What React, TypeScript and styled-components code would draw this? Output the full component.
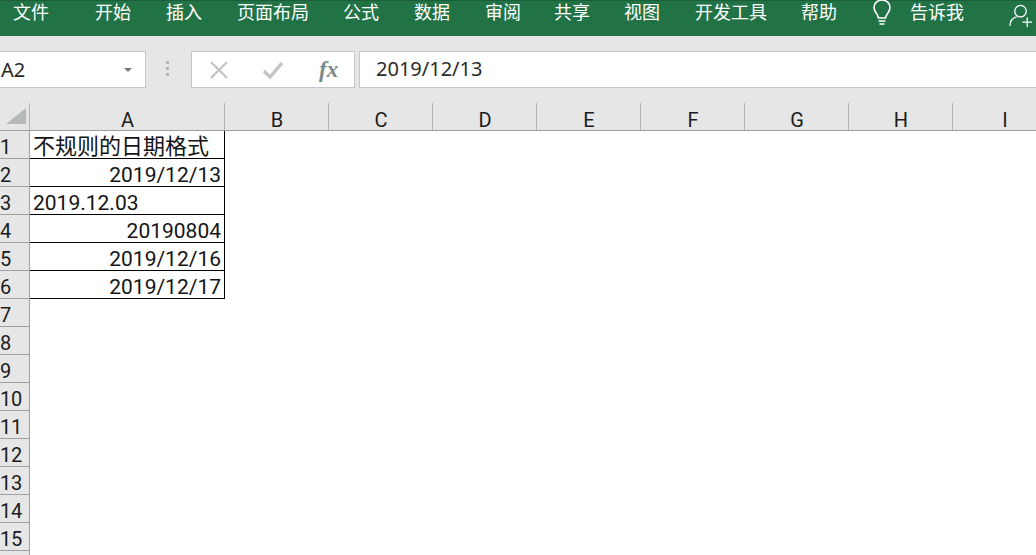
import React from "react";
import styled, { createGlobalStyle } from "styled-components";

const Global = createGlobalStyle`
  html, body { margin: 0; padding: 0; background: #fff; overflow: hidden; }
  #root { width: 1036px; height: 555px; overflow: hidden; }
`;

const Page = styled.div`
  width: 1036px;
  height: 555px;
  display: flex;
  flex-direction: column;
  overflow: hidden;
  font-family: Roboto, "Noto Sans CJK SC", sans-serif;
`;

const Ribbon = styled.div`
  flex: none;
  height: 36px;
  box-sizing: border-box;
  background: #217346;
  border-top: 1px solid #1b5e3a;
  display: flex;
  align-items: flex-start;
  padding-left: 13px;
  color: #fff;
  font-family: Roboto, "Noto Sans CJK SC", sans-serif;
  font-size: 18px;
  line-height: 23px;
`;

const Tab = styled.span<{ $gap: number }>`
  flex: none;
  margin-right: ${(p) => p.$gap}px;
`;

const BulbIcon = styled.svg`
  flex: none;
  width: 20px;
  height: 26px;
  margin: -1px 18px 0 0;
`;

const UserIcon = styled.svg`
  flex: none;
  width: 23px;
  height: 23px;
  margin: 3px 0 0 45px;
`;

const FormulaBar = styled.div`
  flex: none;
  height: 67px;
  box-sizing: border-box;
  background: #e6e6e6;
  padding-top: 15px;
  display: flex;
  align-items: flex-start;
`;

const Field = styled.div`
  box-sizing: border-box;
  height: 37px;
  background: #fff;
  border: 1px solid #c6c6c6;
  display: flex;
  align-items: center;
`;

const NameBox = styled(Field)`
  width: 146px;
  border-left: none;
  padding: 0 13px 0 1px;
  justify-content: space-between;
  font-family: "Noto Sans", sans-serif;
  font-size: 20px;
  line-height: 34px;
  color: #262626;
`;

const Caret = styled.span`
  width: 0;
  height: 0;
  border-left: 4px solid transparent;
  border-right: 4px solid transparent;
  border-top: 4px solid #777;
`;

const Grip = styled.svg`
  flex: none;
  width: 4px;
  height: 37px;
  margin: 0 21px 0 20px;
`;

const ActionBox = styled(Field)`
  width: 164px;
  padding-left: 17px;
`;

const ActionIcon = styled.svg<{ $gap: number }>`
  flex: none;
  width: 20px;
  height: 20px;
  margin-right: ${(p) => p.$gap}px;
`;

const Fx = styled.span`
  font-family: "Liberation Serif", serif;
  font-style: italic;
  font-weight: bold;
  font-size: 23px;
  line-height: 1;
  color: #7d8a84;
  margin-left: 3px;
`;

const FormulaInput = styled(Field)`
  flex: 1;
  margin-left: 4px;
  border-right: none;
  padding: 0 0 2px 16px;
  font-family: "Noto Sans", sans-serif;
  font-size: 20px;
  color: #2b2b2b;
`;

const HeaderRow = styled.div`
  flex: none;
  height: 28px;
  box-sizing: border-box;
  display: flex;
  background: #e6e6e6;
  border-bottom: 1px solid #9f9f9f;
`;

const Corner = styled.div`
  flex: none;
  width: 30px;
  box-sizing: border-box;
  border-right: 1px solid #b4b4b4;
  display: flex;
  align-items: flex-end;
`;

const CornerMark = styled.svg`
  width: 29px;
  height: 27px;
`;

const ColHead = styled.div<{ $w: number }>`
  flex: none;
  width: ${(p) => p.$w}px;
  box-sizing: border-box;
  border-right: 1px solid #b4b4b4;
  padding-left: 1px;
  text-align: center;
  font-size: 20px;
  line-height: 34px;
  color: #1c1c1c;
`;

const Row = styled.div`
  flex: none;
  height: 28px;
  display: flex;
`;

const RowHead = styled.div`
  flex: none;
  width: 30px;
  box-sizing: border-box;
  background: #e6e6e6;
  border-right: 1px solid #9f9f9f;
  border-bottom: 1px solid #9f9f9f;
  font-size: 20px;
  line-height: 32px;
  letter-spacing: -0.3px;
  color: #1c1c1c;
  white-space: nowrap;
`;

const Cell = styled.div<{ $right?: boolean; $bordered?: boolean; $cjk?: boolean }>`
  flex: none;
  width: 195px;
  box-sizing: border-box;
  padding: 0 3px 0 3px;
  border-right: ${(p) => (p.$bordered ? "1px solid #000" : "none")};
  border-bottom: ${(p) => (p.$bordered ? "1px solid #000" : "none")};
  text-align: ${(p) => (p.$right ? "right" : "left")};
  font-size: ${(p) => (p.$cjk ? 22 : 21)}px;
  line-height: 32px;
  color: #141414;
  white-space: nowrap;
`;

const tabs: [string, number][] = [
  ["文件", 46],
  ["开始", 35],
  ["插入", 35],
  ["页面布局", 34],
  ["公式", 35],
  ["数据", 35],
  ["审阅", 33],
  ["共享", 34],
  ["视图", 35],
  ["开发工具", 34],
  ["帮助", 35],
];

const columns: [string, number][] = [
  ["A", 195],
  ["B", 104],
  ["C", 104],
  ["D", 104],
  ["E", 104],
  ["F", 104],
  ["G", 104],
  ["H", 104],
  ["I", 104],
];

const cells: [string, boolean][] = [
  ["不规则的日期格式", false],
  ["2019/12/13", true],
  ["2019.12.03", false],
  ["20190804", true],
  ["2019/12/16", true],
  ["2019/12/17", true],
];

const rowNumbers = Array.from({ length: 16 }, (_, i) => i + 1);

export default function App() {
  return (
    <Page>
      <Global />
      <Ribbon>
        {tabs.map(([label, gap]) => (
          <Tab key={label} $gap={gap}>
            {label}
          </Tab>
        ))}
        <BulbIcon viewBox="0 0 20 26" fill="none" stroke="#fff" strokeWidth="1.6">
          <path d="M6.5 18c0-3.5-4.5-5.5-4.5-10.5a8 7.5 0 0 1 16 0C18 12.500 13.500 14.500 13.500 18z" />
          <path d="M6.500 21h7M7.500 24h5" />
        </BulbIcon>
        <Tab $gap={0}>告诉我</Tab>
        <UserIcon viewBox="0 0 24 24" fill="none" stroke="#fff" strokeWidth="1.3">
          <circle cx="12" cy="7.500" r="6" />
          <path d="M1 23c0-5 3-8.500 7-9.500" />
          <path d="M14 19h10M19 14v10" />
        </UserIcon>
      </Ribbon>
      <FormulaBar>
        <NameBox>
          A2
          <Caret />
        </NameBox>
        <Grip viewBox="0 0 4 37" fill="#b4b4b4">
          <rect x="0" y="10" width="3" height="3" />
          <rect x="0" y="16" width="3" height="3" />
          <rect x="0" y="22" width="3" height="3" />
        </Grip>
        <ActionBox>
          <ActionIcon $gap={34} viewBox="0 0 20 20" stroke="#c4c4c4" strokeWidth="2.400" fill="none">
            <path d="M2 2l16 16M18 2L2 18" />
          </ActionIcon>
          <ActionIcon $gap={33} viewBox="0 0 20 20" stroke="#c4c4c4" strokeWidth="3.400" fill="none">
            <path d="M1 11l6 6L19 3" />
          </ActionIcon>
          <Fx>fx</Fx>
        </ActionBox>
        <FormulaInput>2019/12/13</FormulaInput>
      </FormulaBar>
      <HeaderRow>
        <Corner>
          <CornerMark viewBox="0 0 29 27">
            <polygon points="6,21 26,5 26,21" fill="#b5b9b7" />
          </CornerMark>
        </Corner>
        {columns.map(([label, w]) => (
          <ColHead key={label} $w={w}>
            {label}
          </ColHead>
        ))}
      </HeaderRow>
      {rowNumbers.map((n) => {
        const cell = cells[n - 1];
        return (
          <Row key={n}>
            <RowHead>{n <= 15 ? n : ""}</RowHead>
            <Cell $right={cell?.[1]} $bordered={!!cell} $cjk={n === 1}>
              {cell?.[0]}
            </Cell>
          </Row>
        );
      })}
    </Page>
  );
}
